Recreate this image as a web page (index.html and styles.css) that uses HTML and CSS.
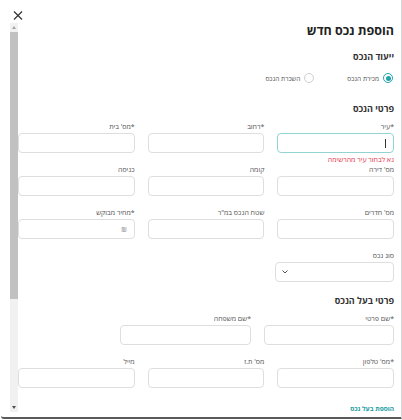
FILE: index.html
```html
<!DOCTYPE html>
<html lang="he" dir="rtl">
<head>
<meta charset="utf-8">
<link rel="stylesheet" href="styles.css">
</head>
<body>
<div class="modal">
  <div class="topbar">
    <button class="close" aria-label="סגור">
      <svg width="10" height="9" viewBox="0 0 10 9"><path d="M1 0.5 L9 8.5 M9 0.5 L1 8.5" stroke="#333" stroke-width="1.2" fill="none"/></svg>
    </button>
  </div>
  <div class="body">
    <div class="content">
      <h1 class="title">הוספת נכס חדש</h1>
      <h2 class="section-title purpose">ייעוד הנכס</h2>
      <div class="radios">
        <label class="radio"><span class="dot checked"></span><span>מכירת הנכס</span></label>
        <label class="radio"><span class="dot"></span><span>השכרת הנכס</span></label>
      </div>

      <h2 class="section-title">פרטי הנכס</h2>
      <div class="grid3">
        <div class="field"><div class="label">*עיר</div><div class="input focused"><span class="caret"></span></div><div class="err">נא לבחור עיר מהרשימה</div></div>
        <div class="field"><div class="label">*רחוב</div><div class="input"></div><div class="err"></div></div>
        <div class="field"><div class="label">*מס' בית</div><div class="input"></div><div class="err"></div></div>

        <div class="field"><div class="label">מס' דירה</div><div class="input"></div><div class="err"></div></div>
        <div class="field"><div class="label">קומה</div><div class="input"></div><div class="err"></div></div>
        <div class="field"><div class="label">כניסה</div><div class="input"></div><div class="err"></div></div>

        <div class="field"><div class="label">מס' חדרים</div><div class="input"></div><div class="err"></div></div>
        <div class="field"><div class="label">שטח הנכס במ"ר</div><div class="input"></div><div class="err"></div></div>
        <div class="field"><div class="label">*מחיר מבוקש</div><div class="input price"><span class="shekel">₪</span></div><div class="err"></div></div>
      </div>

      <div class="field select-field">
        <div class="label">סוג נכס</div>
        <div class="input select">
          <svg width="6" height="4" viewBox="0 0 6 4"><path d="M0.5 0.5 L3 3 L5.5 0.5" stroke="#555" stroke-width="1" fill="none"/></svg>
        </div>
        <div class="err"></div>
      </div>

      <h2 class="section-title owner">פרטי בעל הנכס</h2>
      <div class="grid2">
        <div class="field"><div class="label">*שם פרטי</div><div class="input"></div><div class="err"></div></div>
        <div class="field"><div class="label">*שם משפחה</div><div class="input"></div><div class="err"></div></div>
      </div>
      <div class="grid3">
        <div class="field"><div class="label">*מס' טלפון</div><div class="input"></div><div class="err"></div></div>
        <div class="field"><div class="label">מס' ת.ז</div><div class="input"></div><div class="err"></div></div>
        <div class="field"><div class="label">מייל</div><div class="input"></div><div class="err"></div></div>
      </div>
      <a class="add-owner" href="#">הוספת בעל נכס</a>
      <div class="more"></div>
    </div>
    <div class="scrollbar">
      <div class="sb-btn up"><span class="tri-up"></span></div>
      <div class="sb-thumb"></div>
      <div class="sb-track"></div>
      <div class="sb-btn down"><span class="tri-down"></span></div>
    </div>
  </div>
</div>
</body>
</html>
```

FILE: styles.css
```css
* { box-sizing: border-box; }
html, body { margin: 0; padding: 0; background: #fff; }
body {
  font-family: "Open Sans", "Liberation Sans", Arial, sans-serif;
  color: #333;
  width: 402px;
  height: 420px;
  overflow: hidden;
}
.modal {
  width: 401px;
  height: 419px;
  border-right: 1px solid #d6d6d6;
  border-bottom: 2px solid #5a5a5a;
  border-bottom-left-radius: 3px;
  display: flex;
  flex-direction: column;
  background: #fff;
}
.topbar {
  height: 20px;
  display: flex;
  justify-content: flex-end;
  align-items: flex-start;
  padding-left: 12px;
  padding-top: 11px;
  flex: none;
}
.close {
  border: 0;
  background: none;
  padding: 0;
  margin: 0;
  width: 10px;
  height: 9px;
  display: block;
}
.close svg { display: block; }
.body {
  height: 392px;
  flex: none;
  display: flex;
  padding-left: 9px;
  padding-right: 7px;
  overflow: hidden;
}
.content {
  flex: 1;
  min-width: 0;
  padding-top: 3px;
}
.title {
  margin: 0;
  font-size: 12.5px;
  line-height: 16px;
  font-weight: bold;
  color: #222;
}
.section-title {
  margin: 16px 0 4px;
  font-size: 9px;
  line-height: 16px;
  font-weight: bold;
  color: #333;
}
.section-title.purpose { margin-top: 10px; margin-bottom: 6px; }
.section-title.owner { margin-top: 0; }
.radios {
  display: flex;
  gap: 33px;
  padding-right: 1px;
  height: 14px;
  align-items: center;
}
.radio {
  display: flex;
  align-items: center;
  gap: 4px;
  font-size: 6.5px;
  color: #555;
}
.dot {
  width: 10px;
  height: 10px;
  border-radius: 50%;
  border: 1px solid #cfcfcf;
  display: flex;
  align-items: center;
  justify-content: center;
}
.dot.checked { border-color: #22a3a8; }
.dot.checked::after {
  content: "";
  width: 5px;
  height: 5px;
  border-radius: 50%;
  background: #22a3a8;
}
.grid3 {
  display: grid;
  grid-template-columns: repeat(3, 1fr);
  column-gap: 13px;
}
.grid2 {
  display: grid;
  grid-template-columns: 130px 131px;
  column-gap: 13px;
}
.field {
  display: flex;
  flex-direction: column;
}
.label {
  font-size: 7px;
  line-height: 11px;
  color: #555;
  margin-bottom: 1px;
  white-space: nowrap;
}
.input {
  height: 20px;
  border: 1px solid #dedede;
  border-radius: 4px;
  background: #fff;
  display: flex;
  align-items: center;
  padding: 0 7px;
}
.input.focused { border-color: #92d4d4; }
.caret {
  width: 1px;
  height: 9px;
  background: #333;
}
.shekel {
  font-size: 7px;
  color: #8a8a8a;
}
.err {
  height: 11px;
  font-size: 7px;
  line-height: 13px;
  color: #e8344c;
  white-space: nowrap;
}
.select-field { width: 119px; }
.select {
  justify-content: flex-end;
  padding-left: 6px;
}
.select svg { display: block; }
.add-owner {
  display: block;
  margin-top: 5px;
  font-size: 6.5px;
  line-height: 10px;
  font-weight: bold;
  color: #1b9ca1;
  text-decoration: none;
}
.more { height: 120px; }

.scrollbar {
  width: 8px;
  flex: none;
  margin-top: 3px;
  display: flex;
  flex-direction: column;
  background: #f1f1f1;
}
.sb-btn {
  height: 9px;
  flex: none;
  display: flex;
  align-items: center;
  justify-content: center;
}
.tri-up {
  width: 0; height: 0;
  border-left: 2.5px solid transparent;
  border-right: 2.5px solid transparent;
  border-bottom: 3px solid #a3a3a3;
}
.tri-down {
  width: 0; height: 0;
  border-left: 2.5px solid transparent;
  border-right: 2.5px solid transparent;
  border-top: 3px solid #505050;
}
.sb-thumb {
  height: 267px;
  flex: none;
  background: #c1c1c1;
}
.sb-track { flex: 1; }
```
